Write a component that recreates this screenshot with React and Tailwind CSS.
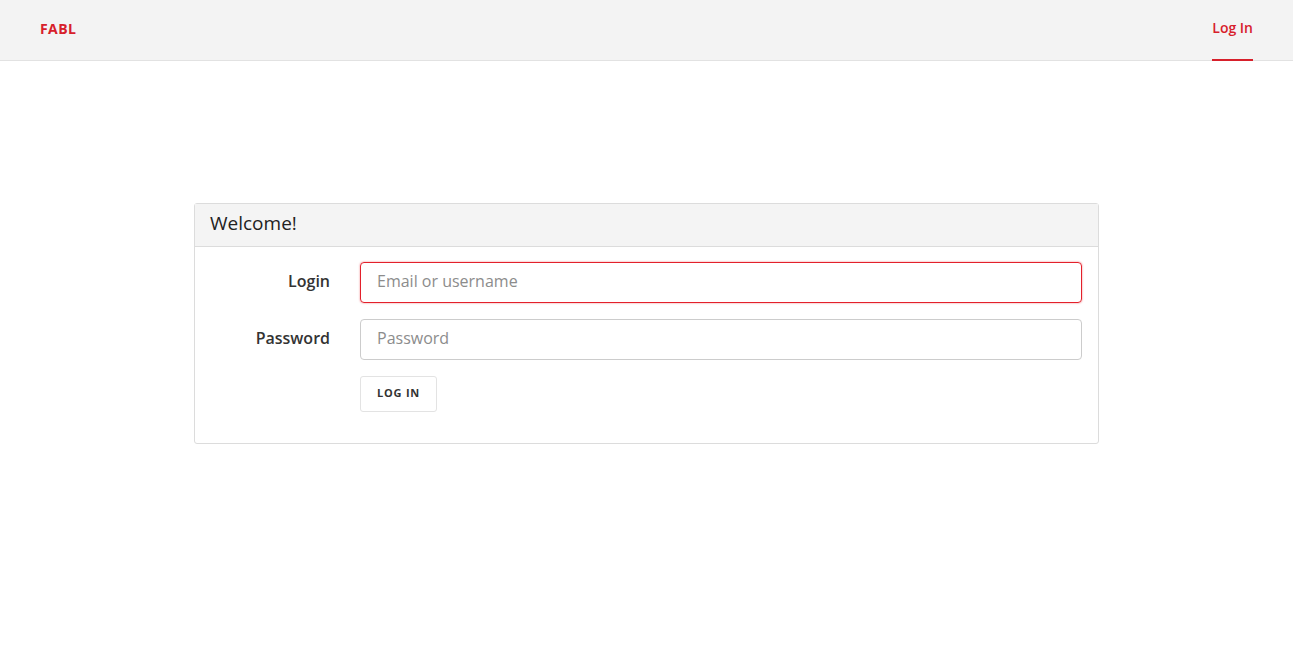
export default function App() {
  return (
    <div className="min-h-[666px] bg-white text-[#333]" style={{ fontFamily: "'Open Sans', 'Noto Sans', sans-serif" }}>
      <header className="h-[61px] bg-[#f3f3f3] border-b border-[#e2e2e2] flex items-stretch justify-between px-10">
        <div className="flex items-center text-[14px] font-bold text-[#d7202b] tracking-[0.4px] pb-[4px]">FABL</div>
        <div className="relative flex items-center text-[14px] font-semibold text-[#d7202b] pb-[6px]">
          Log In
          <span className="absolute left-0 right-0 bottom-[-1px] h-[2px] bg-[#d7202b]" />
        </div>
      </header>
      <main className="flex justify-center pt-[142px]">
        <div className="w-[905px] border border-[#dcdcdc] rounded-[3px] bg-white">
          <div className="h-[43px] bg-[#f4f4f4] border-b border-[#dcdcdc] flex items-center px-[15px] pb-[3px] text-[19px] text-[#222]">
            Welcome!
          </div>
          <div className="pl-[15px] pr-[16px] pt-[15px] pb-[31px]">
            <div className="grid grid-cols-[120px_1fr] gap-x-[30px] gap-y-[16px] items-center">
              <label className="text-right text-[16px] font-semibold text-[#333] pb-[3px]">Login</label>
              <input
                className="h-[41px] rounded-[4px] border border-[#e3202b] shadow-[0_0_2px_rgba(227,32,43,0.6)] px-4 text-[16px] outline-none placeholder:text-[#8c8c8c] pb-[3px]"
                placeholder="Email or username"
              />
              <label className="text-right text-[16px] font-semibold text-[#333] pb-[3px]">Password</label>
              <input
                type="password"
                className="h-[41px] rounded-[4px] border border-[#cccccc] px-4 text-[16px] outline-none placeholder:text-[#8c8c8c] pb-[3px]"
                placeholder="Password"
              />
              <div />
              <div>
                <button className="h-[36px] w-[77px] border border-[#e3e3e3] rounded-[3px] bg-white text-[11px] font-bold tracking-[0.8px] text-[#333] pb-[2px]">
                  LOG IN
                </button>
              </div>
            </div>
          </div>
        </div>
      </main>
    </div>
  );
}
